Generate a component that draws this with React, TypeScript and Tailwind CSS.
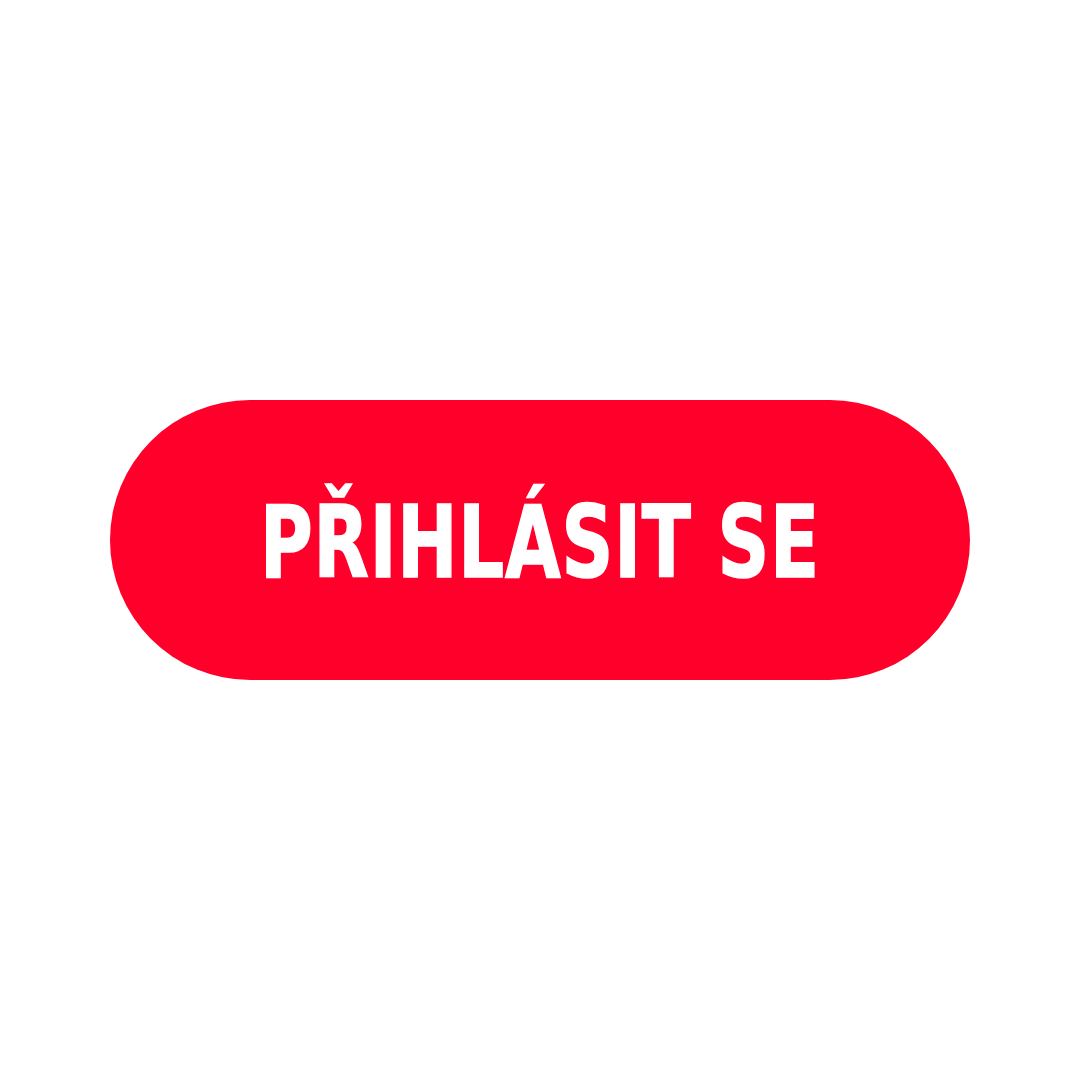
export default function App() {
  return (
    <div className="flex h-[1080px] w-[1080px] items-center justify-center bg-white">
      <button className="flex h-[280px] w-[860px] items-center justify-center rounded-full bg-[#ff002b] text-white">
        <span
          className="inline-block scale-x-[0.80] pt-[6px] text-[100px] font-bold leading-none tracking-[1px] [-webkit-text-stroke:1.5px_white]"
          style={{ fontFamily: '"DejaVu Sans Condensed", "DejaVu Sans", sans-serif' }}
        >
          PŘIHLÁSIT SE
        </span>
      </button>
    </div>
  );
}
